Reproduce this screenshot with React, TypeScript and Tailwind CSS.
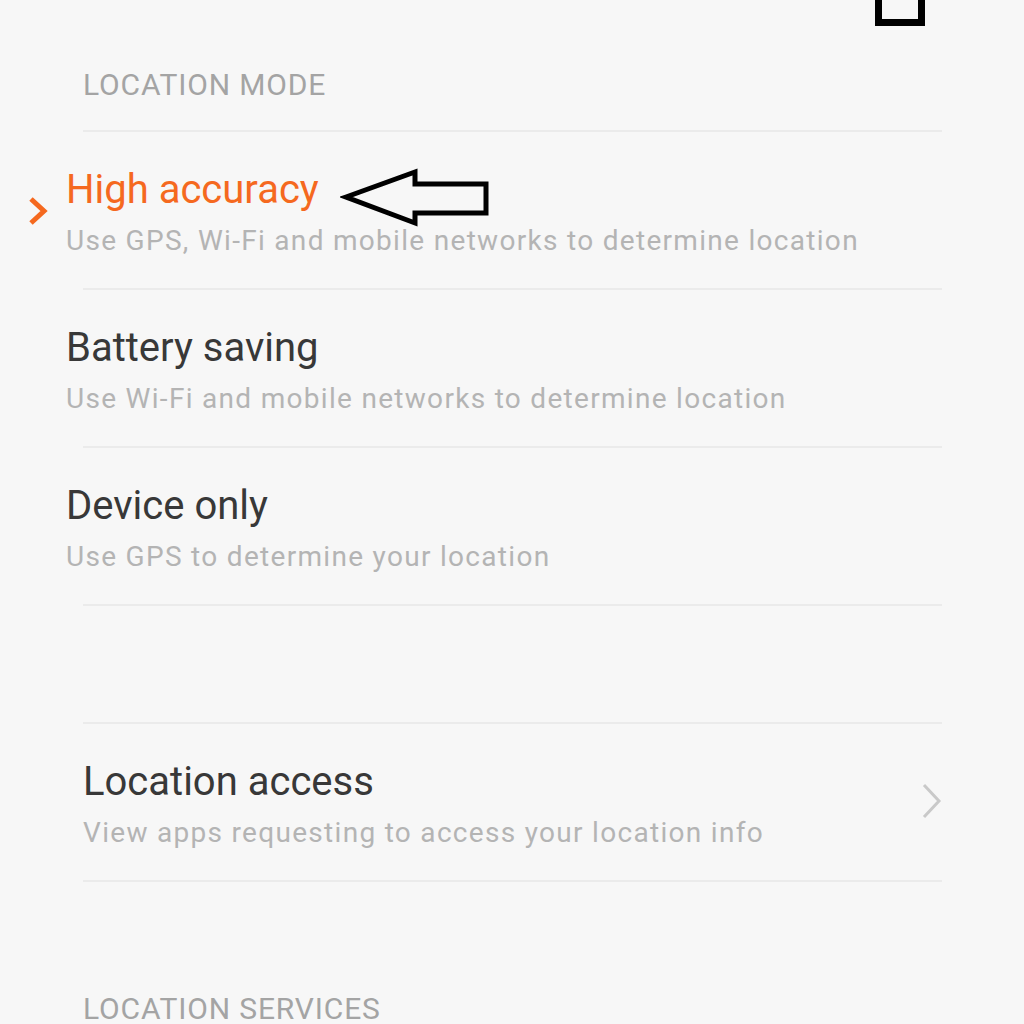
import React from 'react';

const font = { fontFamily: 'Roboto, "Noto Sans", sans-serif' };

type Mode = { title: string; desc: string; selected?: boolean };

const modes: Mode[] = [
  { title: 'High accuracy', desc: 'Use GPS, Wi-Fi and mobile networks to determine location', selected: true },
  { title: 'Battery saving', desc: 'Use Wi-Fi and mobile networks to determine location' },
  { title: 'Device only', desc: 'Use GPS to determine your location' },
];

function Divider() {
  return <div className="h-[2px] bg-[#ebebeb]" />;
}

function SectionHeader({ label, pad }: { label: string; pad: string }) {
  return (
    <div className={pad}>
      <div className="text-[30px] leading-[30px] text-[#a4a4a4] tracking-[0.85px]">{label}</div>
    </div>
  );
}

function ModeRow({ mode }: { mode: Mode }) {
  return (
    <div className="h-[156px] -ml-[55px] flex pt-[34px]">
      <div className="w-[38px] shrink-0 pt-[30px]">
        {mode.selected && (
          <svg width="20" height="30" viewBox="0 0 20 30">
            <polyline points="3,3 16,15 3,27" fill="none" stroke="#f5691f" strokeWidth="5" strokeLinejoin="miter" />
          </svg>
        )}
      </div>
      <div>
        <div className={`text-[40px] leading-[48px] ${mode.selected ? 'text-[#f5691f]' : 'text-[#383838]'}`}>
          {mode.title}
        </div>
        <div className="mt-[10px] text-[28px] leading-[34px] tracking-[1.3px] text-[#b4b4b4]">{mode.desc}</div>
      </div>
    </div>
  );
}

export default function App() {
  return (
    <div className="relative h-[1024px] w-[1024px] overflow-hidden bg-[#f7f7f7]" style={font}>
      {/* annotation box cut off at the top */}
      <div className="absolute left-[875px] top-[-24px] h-[50px] w-[50px] border-[7px] border-black" />

      <div className="ml-[83px] w-[859px]">
        <SectionHeader label="LOCATION MODE" pad="h-[130px] pt-[70px]" />
        <Divider />
        {modes.map((m) => (
          <div key={m.title}>
            <ModeRow mode={m} />
            <Divider />
          </div>
        ))}

        <div className="h-[116px]" />
        <Divider />

        <div className="h-[156px] flex items-start pt-[34px]">
          <div className="flex-1">
            <div className="text-[40px] leading-[48px] text-[#383838]">Location access</div>
            <div className="mt-[10px] text-[28px] leading-[34px] tracking-[1.3px] text-[#b4b4b4]">
              View apps requesting to access your location info
            </div>
          </div>
          <svg width="22" height="38" viewBox="0 0 22 38" className="mt-[24px] -mr-[1px]">
            <polyline points="3,3 18,19 3,35" fill="none" stroke="#c9c9c9" strokeWidth="3" />
          </svg>
        </div>
        <Divider />

        <SectionHeader label="LOCATION SERVICES" pad="pt-[112px]" />
      </div>

      {/* hand-drawn arrow annotation */}
      <svg className="absolute left-[340px] top-[168px]" width="152" height="60" viewBox="0 0 152 60">
        <polygon
          points="6,29 75,4 75,16 146,16 146,45 75,45 75,55"
          fill="none"
          stroke="#000"
          strokeWidth="5"
          strokeLinejoin="miter"
        />
      </svg>
    </div>
  );
}
